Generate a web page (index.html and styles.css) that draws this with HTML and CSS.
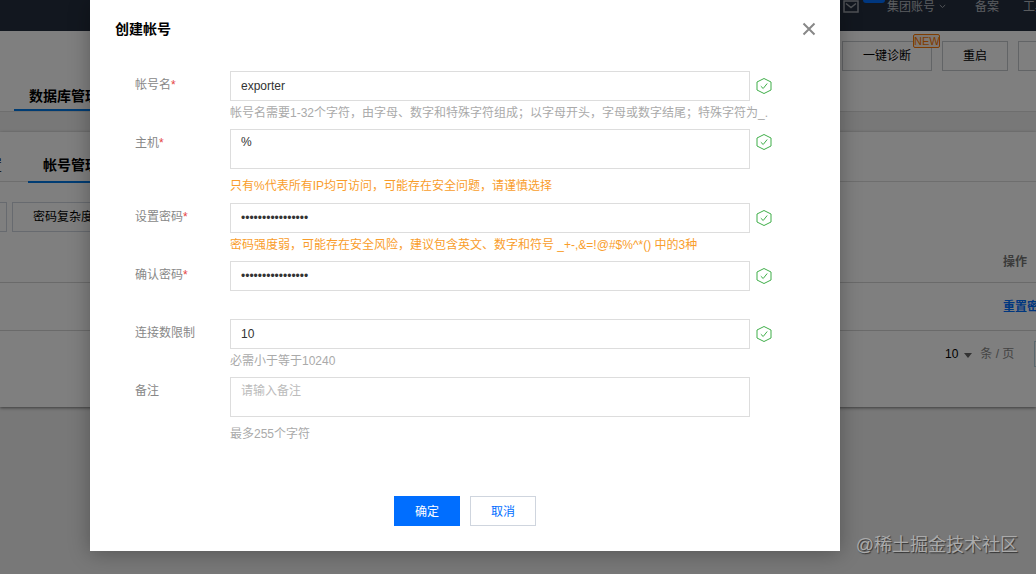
FILE: index.html
```
<!DOCTYPE html>
<html lang="zh-CN">
<head>
  <meta charset="UTF-8">
  <title>创建帐号</title>
  <link rel="stylesheet" href="styles.css">
</head>
<body>
  <svg width="0" height="0" class="sprite">
    <symbol id="ok" viewBox="0 0 16 18">
      <path d="M8 1.5 15 5v8l-7 3.5L1 13V5z" />
      <path d="M4.8 9.2 7.2 11.5 11.2 6.5" />
    </symbol>
  </svg>

  <div class="page">
    <header class="topbar">
      <svg class="mail" width="16" height="13" viewBox="0 0 16 13"><path d="M1 1h14v11H1zM3 3.5l5 4 5-4" /></svg>
      <span class="pill"></span>
      <span class="account">集团账号</span>
      <svg class="chevron" width="7" height="5" viewBox="0 0 7 5"><path d="M.8 1 3.5 3.5 6.2 1" /></svg>
      <span class="record">备案</span>
      <span class="tools">工具</span>
    </header>

    <section class="instance">
      <div class="actions">
        <button class="btn diagnose">一键诊断<span class="new">NEW</span></button>
        <button class="btn restart">重启</button>
        <button class="btn more"></button>
      </div>
      <div class="tabs main-tabs"><span class="tab active">数据库管理</span></div>
    </section>

    <section class="accounts">
      <div class="tabs sub-tabs">
        <span class="tab prev">参数设置</span>
        <span class="tab active">帐号管理</span>
      </div>
      <div class="tools-row">
        <button class="btn first"></button>
        <button class="btn">密码复杂度</button>
      </div>
      <div class="row head"><b>操作</b></div>
      <div class="row"><a>重置密码</a></div>
      <div class="pager">
        <span class="size">10</span><i class="caret"></i><span class="unit">条 / 页</span><span class="page-box"></span>
      </div>
    </section>
  </div>

  <div class="mask"></div>

  <div class="dialog">
    <div class="dialog-head">
      <h3>创建帐号</h3>
      <svg class="close" width="14" height="14" viewBox="0 0 14 14"><path d="M1.5 1.5l11 11M12.5 1.5l-11 11" /></svg>
    </div>

    <form class="form">
      <div class="item">
        <label>帐号名<em>*</em></label>
        <div class="field">
          <input type="text" value="exporter">
          <p class="tip">帐号名需要1-32个字符，由字母、数字和特殊字符组成；以字母开头，字母或数字结尾；特殊字符为_.</p>
        </div>
        <svg class="ok"><use href="#ok" /></svg>
      </div>
      <div class="item host">
        <label>主机<em>*</em></label>
        <div class="field">
          <textarea>%</textarea>
          <p class="tip warn">只有%代表所有IP均可访问，可能存在安全问题，请谨慎选择</p>
        </div>
        <svg class="ok"><use href="#ok" /></svg>
      </div>
      <div class="item">
        <label>设置密码<em>*</em></label>
        <div class="field">
          <input type="password" value="exporter12345678">
          <p class="tip warn">密码强度弱，可能存在安全风险，建议包含英文、数字和符号 _+-,&amp;=!@#$%^*() 中的3种</p>
        </div>
        <svg class="ok"><use href="#ok" /></svg>
      </div>
      <div class="item">
        <label>确认密码<em>*</em></label>
        <div class="field">
          <input type="password" value="exporter12345678">
        </div>
        <svg class="ok"><use href="#ok" /></svg>
      </div>
      <div class="item">
        <label>连接数限制</label>
        <div class="field">
          <input type="text" value="10">
          <p class="tip">必需小于等于10240</p>
        </div>
        <svg class="ok"><use href="#ok" /></svg>
      </div>
      <div class="item">
        <label>备注</label>
        <div class="field">
          <textarea class="remark" placeholder="请输入备注"></textarea>
          <p class="tip">最多255个字符</p>
        </div>
      </div>
    </form>

    <div class="dialog-foot">
      <button class="btn primary">确定</button>
      <button class="btn cancel">取消</button>
    </div>
  </div>

  <div class="watermark">@稀土掘金技术社区</div>
</body>
</html>
```

FILE: styles.css
```
* {
  box-sizing: border-box;
}
body {
  margin: 0;
  height: 574px;
  overflow: hidden;
  background: #f0f0f0;
  color: #000;
  font: 12px/18px "Liberation Sans", "Noto Sans CJK SC", sans-serif;
}
svg {
  fill: none;
  flex: none;
}
.sprite {
  position: absolute;
}
.page {
  width: 1036px;
  height: 574px;
  overflow: hidden;
}
.topbar {
  display: flex;
  align-items: flex-start;
  height: 31px;
  padding-left: 843px;
  background: #242f3e;
  color: #b4b8be;
  white-space: nowrap;
}
.mail {
  stroke: #a0a5ad;
  stroke-width: 1.5;
}
.pill {
  width: 22px;
  height: 3px;
  margin: 0 2px 0 4px;
  background: #006eff;
  border-radius: 0 0 5px 5px;
}
.topbar span {
  flex: none;
}
.account,
.record,
.tools {
  margin-top: -2px;
}
.chevron {
  margin: 4px 29px 0 4px;
  stroke: #a0a5ad;
}
.tools {
  margin-left: 24px;
}
.instance {
  height: 81px;
  background: #fff;
  border-bottom: 1px solid #ddd;
}
.actions {
  display: flex;
  gap: 10px;
  height: 49px;
  padding: 10px 0 0 842px;
}
.btn {
  flex: none;
  height: 30px;
  padding: 0 20px;
  border: 1px solid #cfd5de;
  background: #fff;
  color: #000;
  font: inherit;
  white-space: nowrap;
}
.actions .btn {
  position: relative;
  border-color: #c4c8cc;
}
.diagnose {
  width: 90px;
}
.restart {
  width: 66px;
}
.more {
  width: 66px;
}
.new {
  position: absolute;
  top: -8px;
  right: -9px;
  width: 27px;
  height: 14px;
  border: 1px solid #ff7800;
  border-radius: 2px;
  background: #fff0e4;
  color: #ff7800;
  font-size: 11px;
  line-height: 13px;
  text-align: center;
}
.tabs {
  display: flex;
  font-size: 14px;
}
.tab {
  flex: none;
}
.tab.active {
  border-bottom: 2px solid #0078e6;
  font-weight: bold;
}
.main-tabs .tab {
  height: 31px;
  margin-left: 14px;
  padding: 7px 15px 0;
}
.accounts {
  height: 275px;
  margin-top: 20px;
  background: #fff;
  box-shadow: 0 1px 3px rgba(0, 0, 0, .5);
}
.sub-tabs {
  height: 50px;
  border-bottom: 1px solid #ddd;
}
.sub-tabs .tab {
  height: 51px;
  padding: 24px 15px 0;
}
.sub-tabs .prev {
  width: 28px;
  padding: 24px 26px 0 0;
  direction: rtl;
  white-space: nowrap;
}
.tools-row {
  display: flex;
  gap: 5px;
  height: 60px;
  padding-top: 20px;
}
.first {
  width: 47px;
  margin-left: -40px;
}
.row {
  height: 48px;
  padding: 15px 0 0 1003px;
  border-bottom: 1px solid #d4d4d4;
  white-space: nowrap;
}
.row.head {
  height: 41px;
  padding-top: 11px;
  color: #777;
}
.row a {
  color: #006eff;
  font-weight: bold;
}
.pager {
  display: flex;
  align-items: center;
  height: 46px;
  padding-left: 945px;
}
.caret {
  margin: 3px 8px 0 6px;
  border: 4px solid transparent;
  border-top: 5px solid #666;
  border-bottom: 0;
}
.unit {
  color: #888;
  white-space: nowrap;
}
.page-box {
  flex: none;
  width: 30px;
  height: 26px;
  margin-left: 20px;
  border: 1px solid #b8d0dd;
}
.mask {
  position: absolute;
  inset: 0;
  background: rgba(0, 0, 0, .5);
}
.dialog {
  position: absolute;
  top: 0;
  left: 90px;
  width: 750px;
  height: 551px;
  background: #fff;
  box-shadow: 0 2px 20px rgba(0, 0, 0, .3);
}
.dialog-head {
  display: flex;
  justify-content: space-between;
  align-items: flex-start;
  height: 71px;
  padding: 20px 24px 0 25px;
}
h3 {
  margin: 0;
  font-size: 14px;
  line-height: 18px;
}
.close {
  margin-top: 2px;
  stroke: #888;
  stroke-width: 2;
}
.item {
  display: flex;
  height: 58px;
  padding-left: 45px;
}
.item.host {
  height: 74px;
}
label {
  flex: none;
  width: 95px;
  padding-top: 5px;
  color: #888;
}
em {
  color: #e54545;
  font-style: normal;
}
.field {
  width: 520px;
}
input,
textarea {
  display: block;
  width: 520px;
  height: 30px;
  padding: 0 10px;
  border: 1px solid #ddd;
  border-radius: 0;
  color: #333;
  font: inherit;
  resize: none;
}
textarea {
  height: 40px;
  padding-top: 3px;
  overflow: hidden;
}
.remark {
  padding-top: 4px;
}
::placeholder {
  color: #bbb;
}
.tip {
  margin: 3px 0 0;
  color: #aaa;
  white-space: nowrap;
}
textarea + .tip {
  margin-top: 8px;
}
.tip.warn {
  color: #f99d2b;
}
.ok {
  width: 16px;
  height: 18px;
  margin: 6px 0 0 5.5px;
  stroke: #3fae49;
}
.host .ok {
  margin-top: 4px;
}
.dialog-foot {
  display: flex;
  justify-content: center;
  gap: 10px;
  padding-top: 61px;
}
.dialog-foot .btn {
  width: 66px;
  padding-top: 2px;
}
.btn.primary {
  border-color: #006eff;
  background: #006eff;
  color: #fff;
}
.btn.cancel {
  color: #006eff;
}
.watermark {
  position: absolute;
  right: 18px;
  bottom: 16px;
  color: #aaa;
  font-size: 18px;
  line-height: 26px;
  text-shadow: 1px 1px 1px #333;
}
```
